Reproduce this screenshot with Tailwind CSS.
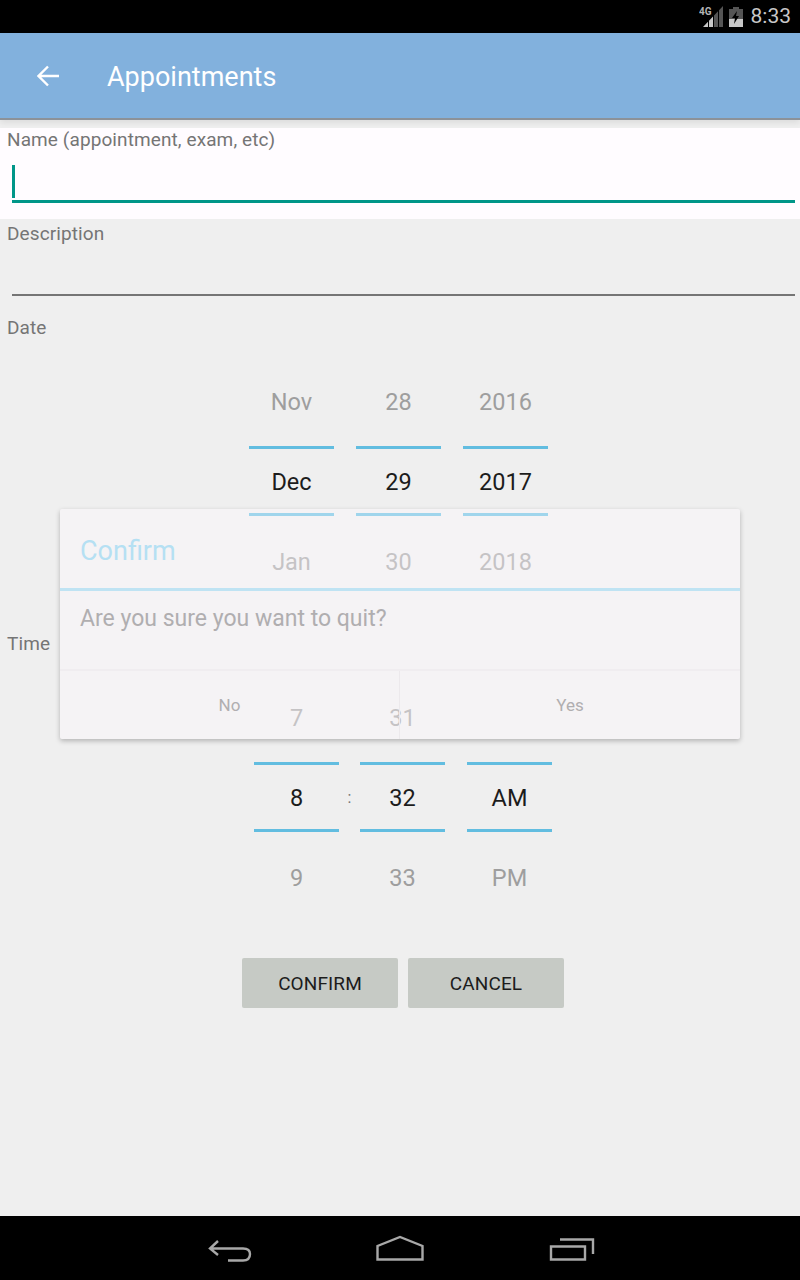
<!DOCTYPE html>
<html lang="en">
<head>
    <meta charset="UTF-8">
    <meta name="viewport" content="width=device-width, initial-scale=1.0">
    <title>Appointments</title>
    <script src="https://cdn.jsdelivr.net/npm/@tailwindcss/browser@4"></script>
</head>
<body class="relative w-[800px] h-[1280px] overflow-hidden bg-[#efefef] font-['Roboto',sans-serif]">

<!-- status bar -->
<div class="h-[33px] bg-black flex items-center justify-end">
    <svg width="25" height="22" viewBox="0 0 25 22" class="mr-[5px]">
        <path d="M15 9.450 L19 5.250 V21 H15 Z M20 4.200 L24 0 V21 H20 Z" fill="#555"/>
        <path d="M4 21 L9 15.750 V21 Z M10 14.700 L14 10.500 V21 H10 Z" fill="#c8c8c8"/>
        <text x="0" y="9" font-size="10" font-weight="700" fill="#b4b4b4" font-family="Roboto">4G</text>
    </svg>
    <svg width="14" height="20" viewBox="0 0 14 20" class="mr-[8px]">
        <path d="M4 0 h6 v2 h4 v18 H0 V2 h4 Z" fill="#555"/>
        <path d="M0 12 h14 v8 H0 Z" fill="#c8c8c8"/>
        <path d="M8 4 L3 11 h3 l-1 6 L10 9 H7 Z" fill="#000"/>
    </svg>
    <span class="text-[21px] text-[#c8c8c8] mr-[9px] leading-none">8:33</span>
</div>

<!-- app bar -->
<div class="relative h-[87px] bg-[#82b1dd] flex items-center border-b-[2px] border-[#8c9299] shadow-[0_3px_6px_rgba(0,0,0,0.08)]">
    <svg width="24" height="24" viewBox="0 0 24 24" class="ml-[37px]" fill="none" stroke="#fff" stroke-width="2.4">
        <path d="M22 12 H2 M11 2.500 L1.500 12 L11 21.500"/>
    </svg>
    <span class="ml-[46px] mt-[4px] text-[27px] text-white leading-none">Appointments</span>
</div>

<!-- form -->
<div class="mt-[8px] h-[91px] bg-[#fffcff]">
    <div class="px-[7px] text-[19px] tracking-[0.1px] leading-[24px] text-[#757575]">Name (appointment, exam, etc)</div>
    <div class="mt-[13px] ml-[12px] mr-[5px] h-[38px] border-b-[3px] border-[#009688]">
        <div class="w-[3px] h-[33px] bg-[#009688]"></div>
    </div>
</div>
<div class="mt-[3px] h-[75px]">
    <div class="px-[7px] text-[19px] tracking-[0.1px] leading-[23px] text-[#757575]">Description</div>
    <div class="mt-[49px] ml-[12px] mr-[5px] h-[2px] bg-[#757575]"></div>
</div>
<div class="mt-[19px] px-[7px] text-[19px] tracking-[0.1px] leading-[23px] text-[#757575]">Date</div>

<!-- date picker -->
<div class="mt-[23px] ml-[249px] flex gap-[22px]">
    <div class="w-[85px] text-center text-[23.500px]">
        <div class="h-[80px] leading-[80px] text-[#9e9e9e]">Nov</div>
        <div class="h-[80px] pt-[4px]"><div class="h-[70px] leading-[66px] text-[#1c1c1c] border-y-[3px] border-[#62bde0]">Dec</div></div>
        <div class="h-[80px] leading-[80px] text-[#9e9e9e]">Jan</div>
    </div>
    <div class="w-[85px] text-center text-[23.500px]">
        <div class="h-[80px] leading-[80px] text-[#9e9e9e]">28</div>
        <div class="h-[80px] pt-[4px]"><div class="h-[70px] leading-[66px] text-[#1c1c1c] border-y-[3px] border-[#62bde0]">29</div></div>
        <div class="h-[80px] leading-[80px] text-[#9e9e9e]">30</div>
    </div>
    <div class="w-[85px] text-center text-[23.500px]">
        <div class="h-[80px] leading-[80px] text-[#9e9e9e]">2016</div>
        <div class="h-[80px] pt-[4px]"><div class="h-[70px] leading-[66px] text-[#1c1c1c] border-y-[3px] border-[#62bde0]">2017</div></div>
        <div class="h-[80px] leading-[80px] text-[#9e9e9e]">2018</div>
    </div>
</div>

<div class="mt-[30px] px-[7px] text-[19px] tracking-[0.1px] leading-[23px] text-[#757575]">Time</div>

<!-- time picker -->
<div class="mt-[23px] ml-[254px] flex">
    <div class="w-[85px] text-center text-[23.500px]">
        <div class="h-[80px] leading-[80px] text-[#9e9e9e]">7</div>
        <div class="h-[80px] pt-[4px]"><div class="h-[70px] leading-[66px] text-[#1c1c1c] border-y-[3px] border-[#62bde0]">8</div></div>
        <div class="h-[80px] leading-[80px] text-[#9e9e9e]">9</div>
    </div>
    <div class="w-[21px] h-[240px] leading-[240px] text-center text-[16px] text-[#757575]">:</div>
    <div class="w-[85px] text-center text-[23.500px]">
        <div class="h-[80px] leading-[80px] text-[#9e9e9e]">31</div>
        <div class="h-[80px] pt-[4px]"><div class="h-[70px] leading-[66px] text-[#1c1c1c] border-y-[3px] border-[#62bde0]">32</div></div>
        <div class="h-[80px] leading-[80px] text-[#9e9e9e]">33</div>
    </div>
    <div class="ml-[22px] w-[85px] text-center text-[23.500px]">
        <div class="h-[80px]"></div>
        <div class="h-[80px] pt-[4px]"><div class="h-[70px] leading-[66px] text-[#1c1c1c] border-y-[3px] border-[#62bde0]">AM</div></div>
        <div class="h-[80px] leading-[80px] text-[#9e9e9e]">PM</div>
    </div>
</div>

<!-- buttons -->
<div class="mt-[40px] ml-[242px] flex gap-[10px]">
    <button class="w-[156px] h-[50px] pt-[2px] rounded-[2px] bg-[#c6cac5] text-[19px] tracking-[0.1px] text-[#1c1c1c]">CONFIRM</button>
    <button class="w-[156px] h-[50px] pt-[2px] rounded-[2px] bg-[#c6cac5] text-[19px] tracking-[0.1px] text-[#1c1c1c]">CANCEL</button>
</div>

<!-- confirm dialog, sits over the pickers -->
<div class="absolute left-[60px] top-[509px] w-[680px] h-[230px] rounded-[2px] bg-[#fffaff]/40 shadow-[0_2px_5px_rgba(0,0,0,0.25)] flex flex-col">
    <div class="h-[82px] border-b-[3px] border-[#bfe3f3] pl-[20px] pt-[24px] text-[27px] leading-[36px] text-[#b5e0f3]">Confirm</div>
    <div class="h-[81px] border-b-[2px] border-[#f0edf0] pl-[20px] pt-[13px] text-[23px] leading-[30px] text-[#b0aeb0]">Are you sure you want to quit?</div>
    <div class="flex-1 flex">
        <div class="w-[340px] border-r border-[#ece9ec] text-center text-[17px] leading-[68px] text-[#b0aeb0]">No</div>
        <div class="flex-1 text-center text-[17px] leading-[68px] text-[#b0aeb0]">Yes</div>
    </div>
</div>

<!-- navigation bar -->
<div class="absolute left-0 bottom-0 w-full h-[64px] bg-black">
    <svg width="800" height="64" viewBox="0 0 800 64" fill="none" stroke="#a8a8a8" stroke-width="2.4">
        <path d="M218 25 L210 32.500 L218 39 M210 32.500 H243 Q250 32.500 250 38 Q250 44.500 243 44.500 H228"/>
        <path d="M377.500 43.500 V30 L400 21 L422.500 30 V43.500 Z"/>
        <path d="M551 30.500 H585 V43.500 H551 Z M560 23.500 H593 V38"/>
    </svg>
</div>
</body>
</html>
